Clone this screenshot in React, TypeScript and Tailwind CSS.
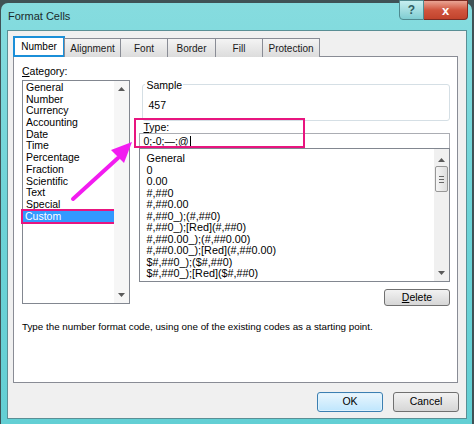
import React from 'react';

const categories = [
  'General',
  'Number',
  'Currency',
  'Accounting',
  'Date',
  'Time',
  'Percentage',
  'Fraction',
  'Scientific',
  'Text',
  'Special',
  'Custom',
];

const formats = [
  'General',
  '0',
  '0.00',
  '#,##0',
  '#,##0.00',
  '#,##0_);(#,##0)',
  '#,##0_);[Red](#,##0)',
  '#,##0.00_);(#,##0.00)',
  '#,##0.00_);[Red](#,##0.00)',
  '$#,##0_);($#,##0)',
  '$#,##0_);[Red]($#,##0)',
];

const tabs = ['Number', 'Alignment', 'Font', 'Border', 'Fill', 'Protection'];
const tabWidths = ['w-[52px]', 'w-[57px]', 'w-[48px]', 'w-[49px]', 'w-[48px]', 'w-[58px]'];

const ArrowUp = () => (
  <svg width="7" height="4" viewBox="0 0 7 4">
    <path d="M0 4 L3.5 0 L7 4 Z" fill="#5a5a5a" />
  </svg>
);

const ArrowDown = () => (
  <svg width="7" height="4" viewBox="0 0 7 4">
    <path d="M0 0 L3.5 4 L7 0 Z" fill="#5a5a5a" />
  </svg>
);

const App = () => {
  return (
    <div
      className="relative w-[474px] h-[424px] bg-[#3f5256] overflow-hidden"
      style={{ fontFamily: '"Liberation Sans", Arial, sans-serif' }}
    >
      {/* Window frame */}
      <div className="ml-[1px] mt-[3px] w-[471px] h-[421px] rounded-t-[7px] bg-gradient-to-b from-[#86dcdf] via-[#6dd3d7] to-[#63cfd4] flex flex-col pl-[6px] pr-[5px] pb-[5px]">
        {/* Title bar */}
        <div className="h-[27px] flex items-start justify-between">
          <span className="mt-[7px] ml-[1px] text-[11px] leading-[13px] text-[#1b2a2c]">Format Cells</span>
          <div className="flex -mt-[3px] mr-[-1px]">
            <div className="w-[25px] h-[20px] rounded-bl-[4px] border border-[#4f8a90] bg-gradient-to-b from-[#c6eef0] to-[#7fcdd2] flex items-center justify-center text-[12px] font-bold text-[#2f5d62] leading-none">
              ?
            </div>
            <div className="w-[44px] h-[20px] rounded-br-[4px] border border-[#7c2b22] border-l-0 bg-gradient-to-b from-[#e9a494] via-[#d0553e] to-[#c2432c] flex items-center justify-center text-[13px] font-bold text-white leading-none">
              x
            </div>
          </div>
        </div>

        {/* Dialog body */}
        <div className="flex-1 bg-[#f0f0f0] border border-[#5a8f95] pt-[5px] px-[5px] flex flex-col">
          {/* Tabs */}
          <div className="flex h-[21px] items-end relative z-10">
            {tabs.map((t, i) =>
              i === 0 ? (
                <div
                  key={t}
                  className={`${tabWidths[i]} h-[21px] bg-white border-2 border-[#1b8fd8] flex items-center justify-center text-[10px] text-black`}
                >
                  {t}
                </div>
              ) : (
                <div
                  key={t}
                  className={`${tabWidths[i]} h-[19px] -ml-px border border-[#898c95] border-b-0 bg-gradient-to-b from-[#f4f4f4] to-[#dcdcdc] flex items-center justify-center text-[10px] text-[#1a1a1a]`}
                >
                  {t}
                </div>
              )
            )}
          </div>

          {/* Tab panel */}
          <div className="w-[445px] h-[327px] -mt-px bg-white border border-[#898c95] pl-[8px] pr-[7px] pt-[8px] flex flex-col text-[10px] text-black">
            <div className="flex">
              {/* Category */}
              <div className="w-[109px] flex flex-col">
                <div className="h-[15px] text-[10.5px] leading-[13px]">
                  <span className="underline">C</span>ategory:
                </div>
                <div className="h-[224px] border border-[#828790] flex">
                  <div className="flex-1 pt-[1px] pl-[1px] text-[10.5px]">
                    {categories.map((c) =>
                      c === 'Custom' ? (
                        <div
                          key={c}
                          className="h-[11.7px] leading-[11.7px] pl-[2px] bg-[#3399ff] text-white outline-2 outline-[#e8157f] -ml-px"
                        >
                          {c}
                        </div>
                      ) : (
                        <div key={c} className="h-[11.7px] leading-[11.7px] pl-[2px]">
                          {c}
                        </div>
                      )
                    )}
                  </div>
                  <div className="w-[15px] bg-[#f6f6f6] flex flex-col items-center justify-between py-[6px]">
                    <ArrowUp />
                    <ArrowDown />
                  </div>
                </div>
              </div>

              {/* Type */}
              <div className="ml-[9px] w-[312px] flex flex-col">
                <div className="ml-[3px] mt-[19px] h-[37px] border border-[#d5dfe5] rounded-[3px] relative">
                  <span className="absolute -top-[5px] left-[2px] bg-white px-[1px] leading-[11px] text-[10.5px]">Sample</span>
                  <div className="pt-[14px] pl-[5px] leading-[12px] text-[10.5px]">457</div>
                </div>
                <div className="mt-[1px] h-[10px] leading-[10px] pl-[4px] text-[10.5px]">
                  <span className="underline">T</span>ype:
                </div>
                <div className="h-[16px] mt-[1px] border border-[#abadb3] flex items-center pl-[3px] leading-none text-[10.5px]">
                  0;-0;—;@<span className="inline-block w-px h-[11px] bg-black ml-px" />
                </div>
                <div className="h-[134px] -mt-px border border-[#828790] flex">
                  <div className="flex-1 pt-[4px] pl-[6px] text-[10.8px]">
                    {formats.map((f) => (
                      <div key={f} className="h-[11.5px] leading-[11.5px] whitespace-nowrap">
                        {f}
                      </div>
                    ))}
                  </div>
                  <div className="w-[15px] bg-[#f0f0f0] flex flex-col items-center pt-[9px] pb-[6px]">
                    <ArrowUp />
                    <div className="mt-[4px] w-[13px] h-[26px] rounded-[2px] border border-[#979797] bg-gradient-to-r from-[#f5f5f5] to-[#dedede] flex flex-col items-center justify-center gap-[2px]">
                      <div className="w-[5px] h-px bg-[#666]" />
                      <div className="w-[5px] h-px bg-[#666]" />
                      <div className="w-[5px] h-px bg-[#666]" />
                    </div>
                    <div className="flex-1" />
                    <ArrowDown />
                  </div>
                </div>
                <div className="flex justify-end mt-[7px]">
                  <div className="w-[66px] h-[17px] rounded-[3px] border border-[#707070] bg-gradient-to-b from-[#f2f2f2] to-[#d6d6d6] flex items-center justify-center leading-none text-[10.5px]">
                    <span className="underline">D</span>elete
                  </div>
                </div>
              </div>
            </div>
            <div className="mt-[15px] leading-[12px] text-[9.8px]">
              Type the number format code, using one of the existing codes as a starting point.
            </div>
          </div>

          {/* Bottom buttons */}
          <div className="flex justify-end gap-[10px] mt-[9px] pr-[2px] text-[10.5px]">
            <div className="w-[66px] h-[20px] rounded-[3px] border border-[#3c7fb1] bg-gradient-to-b from-[#eaf6fd] to-[#bee6fd] flex items-center justify-center shadow-[inset_0_0_0_1px_#dff2fd]">
              OK
            </div>
            <div className="w-[66px] h-[20px] rounded-[3px] border border-[#707070] bg-gradient-to-b from-[#f2f2f2] to-[#d6d6d6] flex items-center justify-center">
              Cancel
            </div>
          </div>
        </div>
      </div>

      {/* Annotation overlays */}
      <div className="absolute left-[134px] top-[118px] w-[171px] h-[30px] border-2 border-[#e8157f] pointer-events-none" />
      <svg className="absolute left-0 top-0 pointer-events-none" width="474" height="424">
        <path d="M73 199 L118 158" stroke="#f21cf0" strokeWidth="4" strokeLinecap="round" />
        <path d="M132 142 L111 150 L124 163 Z" fill="#f21cf0" />
      </svg>
    </div>
  );
};

export default App;
